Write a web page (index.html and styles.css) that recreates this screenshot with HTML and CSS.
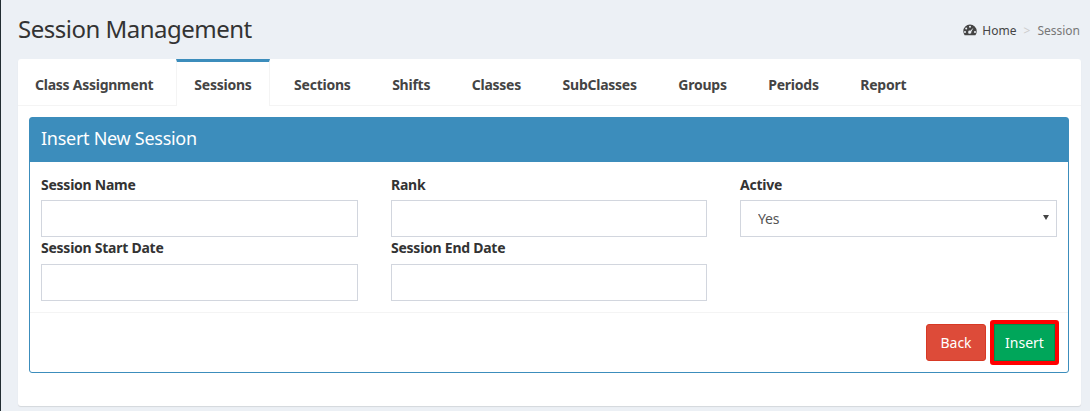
FILE: index.html
```html
<!DOCTYPE html>
<html lang="en">
<head>
<meta charset="utf-8">
<title>Session Management</title>
<link rel="stylesheet" href="styles.css">
</head>
<body>
<div class="wrapper">
  <header class="page-head">
    <h1>Session Management</h1>
    <ol class="crumbs">
      <li class="home">
        <svg class="gauge" viewBox="0 0 14 12" width="14" height="12" aria-hidden="true">
          <path fill="#444" fill-rule="evenodd" d="M7 0.5a6.7 6.7 0 0 1 6.7 6.7c0 1.5-.5 2.9-1.3 4H1.6A6.700 6.700 0 0 1 .3 7.200 6.700 6.700 0 0 1 7 .5zM7 1.800a1 1 0 1 0 0 2 1 1 0 0 0 0-2zM3.200 3.600a1 1 0 1 0 0 2 1 1 0 0 0 0-2zM2 7a1 1 0 1 0 0 2 1 1 0 0 0 0-2zM12 7a1 1 0 1 0 0 2 1 1 0 0 0 0-2zM10.500 3.800L7.300 6.700a1.600 1.600 0 1 0 1 1.100z"/>
        </svg>
        Home
      </li>
      <li class="sep">&gt;</li>
      <li class="current">Session</li>
    </ol>
  </header>
  <main class="tabs-card">
    <nav class="tabs">
      <a class="tab first">Class Assignment</a>
      <a class="tab active">Sessions</a>
      <a class="tab">Sections</a>
      <a class="tab">Shifts</a>
      <a class="tab">Classes</a>
      <a class="tab">SubClasses</a>
      <a class="tab">Groups</a>
      <a class="tab">Periods</a>
      <a class="tab">Report</a>
    </nav>
    <section class="box">
      <h2 class="box-title">Insert New Session</h2>
      <form class="box-body">
        <div class="field">
          <label for="name">Session Name</label>
          <input id="name" type="text">
        </div>
        <div class="field">
          <label for="rank">Rank</label>
          <input id="rank" type="text">
        </div>
        <div class="field">
          <label for="active">Active</label>
          <div class="select-wrap">
            <select id="active"><option>Yes</option><option>No</option></select>
          </div>
        </div>
        <div class="field lower">
          <label for="start">Session Start Date</label>
          <input id="start" type="text">
        </div>
        <div class="field lower">
          <label for="end">Session End Date</label>
          <input id="end" type="text">
        </div>
      </form>
      <footer class="box-footer">
        <button class="btn btn-back" type="button">Back</button>
        <button class="btn btn-insert" type="button">Insert</button>
      </footer>
    </section>
  </main>
</div>
</body>
</html>
```
FILE: styles.css
```css
* { box-sizing: border-box; }
html, body { margin: 0; height: 100%; }
body {
  background: #ecf0f5;
  color: #333;
  font-family: "Noto Sans", "Open Sans", sans-serif;
  font-size: 14px;
  overflow: hidden;
}
.wrapper {
  height: 411px;
  border-left: 1px solid #222d32;
  padding: 0 9px 0 17px;
}
.page-head {
  height: 59px;
  display: flex;
  justify-content: space-between;
  align-items: center;
  padding-top: 1px;
}
h1 {
  margin: 0 0 4px;
  font-size: 24px;
  font-weight: 400;
  letter-spacing: -.5px;
  color: #333;
}
.crumbs {
  list-style: none;
  display: flex;
  align-items: center;
  margin: 0;
  padding: 0 1px 0 0;
  font-size: 12px;
  color: #444;
}
.home { display: flex; align-items: center; gap: 5px; }
.sep { color: #ccc; margin: 0 7px; }
.current { color: #777; }
.tabs-card {
  height: 347px;
  background: #fff;
  border-radius: 3px;
  box-shadow: 0 1px 1px rgba(0,0,0,.1);
  padding-bottom: 33px;
  display: flex;
  flex-direction: column;
}
.tabs {
  display: flex;
  height: 47px;
  border-bottom: 1px solid #f4f4f4;
}
.tab {
  height: 47px;
  padding: 13px 17px 0;
  margin-right: 7.6px;
  font-weight: 700;
  font-size: 14px;
  letter-spacing: -.25px;
  line-height: 20px;
  color: #444;
  border-top: 3px solid transparent;
  white-space: nowrap;
}
.tab.first { margin-right: 6px; }
.tab.active {
  border-top-color: #3c8dbc;
  border-left: 1px solid #f4f4f4;
  border-right: 1px solid #f4f4f4;
  background: #fff;
}
.box {
  margin: 11px 12px 0 11px;
  flex: 1;
  border: 1px solid #3c8dbc;
  border-radius: 3px;
  display: flex;
  flex-direction: column;
}
.box-title {
  margin: 0;
  background: #3c8dbc;
  color: #fff;
  height: 44px;
  padding: 0 11px;
  line-height: 41px;
  font-size: 18px;
  letter-spacing: -.28px;
  font-weight: 400;
}
.box-body {
  display: grid;
  grid-template-columns: 317px 316px 317px;
  column-gap: 33px;
  padding: 13px 11px 11px;
  border-bottom: 1px solid #f4f4f4;
}
.field { display: flex; flex-direction: column; }
label {
  font-weight: 700;
  font-size: 14px;
  letter-spacing: -.25px;
  line-height: 20px;
  height: 25px;
}
.field.lower { margin-top: 1px; }
.field.lower label { height: 26px; }
input, select {
  display: block;
  height: 37px;
  border: 1px solid #d2d6de;
  border-radius: 0;
  background: #fff;
  width: 100%;
  font: inherit;
  letter-spacing: -.2px;
  color: #555;
  outline: none;
}
select {
  appearance: none;
  -webkit-appearance: none;
  padding: 0 16px 0 17px;
}
.select-wrap { position: relative; }
.select-wrap::after {
  content: "";
  position: absolute;
  right: 8px;
  top: 15px;
  border-left: 3px solid transparent;
  border-right: 3px solid transparent;
  border-top: 5px solid #444;
  pointer-events: none;
}
.box-footer {
  flex: 1;
  display: flex;
  justify-content: flex-end;
  align-items: center;
  gap: 4px;
  padding: 0 9px 1px;
}
.btn {
  font: inherit;
  color: #fff;
  border-radius: 3px;
  cursor: pointer;
}
.btn-back {
  width: 60px;
  height: 37px;
  background: #dd4b39;
  border: 1px solid #d73925;
}
.btn-insert {
  width: 69px;
  height: 45px;
  background: #00a65a;
  border: 4px solid #f00;
  box-shadow: inset 0 0 0 1px #008d4c;
}
```
